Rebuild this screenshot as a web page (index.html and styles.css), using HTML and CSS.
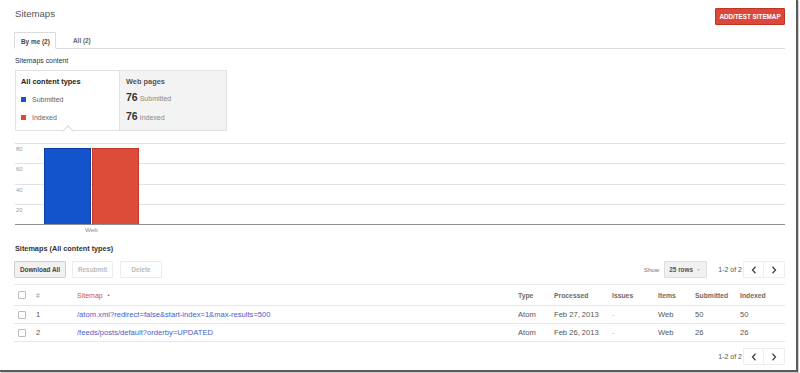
FILE: index.html
```html
<!DOCTYPE html>
<html>
<head>
<meta charset="utf-8">
<link rel="stylesheet" href="styles.css">
</head>
<body>
<div class="frame">
  <div class="page">
    <div class="topbar">
      <div class="title">Sitemaps</div>
      <button class="btn-red">ADD/TEST SITEMAP</button>
    </div>
    <div class="tabs">
      <div class="tab active">By me (2)</div>
      <div class="tab">All (2)</div>
    </div>
    <div class="section-label">Sitemaps content</div>
    <div class="summary">
      <div class="panel panel-left">
        <div class="panel-head">All content types</div>
        <div class="legend"><span class="sq sq-blue"></span>Submitted</div>
        <div class="legend"><span class="sq sq-red"></span>Indexed</div>
      </div>
      <div class="panel panel-right">
        <div class="panel-head2">Web pages</div>
        <div class="stat"><b>76</b>Submitted</div>
        <div class="stat"><b>76</b>Indexed</div>
      </div>
    </div>
    <div class="chart">
      <div class="plot">
        <div class="band"><span>80</span></div>
        <div class="band b21"><span>60</span></div>
        <div class="band"><span>40</span></div>
        <div class="band"><span>20</span></div>
        <div class="bars">
          <div class="bar bar-blue"></div>
          <div class="bar bar-red"></div>
        </div>
      </div>
      <div class="xlabels"><span class="xl">Web</span></div>
    </div>
    <div class="section-label2">Sitemaps (All content types)</div>
    <div class="toolbar">
      <div class="tb-left">
        <button class="btn btn-main">Download All</button>
        <button class="btn btn-dis">Resubmit</button>
        <button class="btn btn-dis btn-del">Delete</button>
      </div>
      <div class="tb-right">
        <span class="show">Show</span>
        <button class="btn btn-select">25 rows <span class="caret">&#9660;</span></button>
        <span class="count">1-2 of 2</span>
        <div class="pager">
          <button class="pg"><svg width="6" height="8" viewBox="0 0 6 8"><polyline points="4.5,0.8 1.5,4 4.5,7.2" fill="none" stroke="#444" stroke-width="1.3"/></svg></button>
          <button class="pg"><svg width="6" height="8" viewBox="0 0 6 8"><polyline points="1.5,0.8 4.5,4 1.5,7.2" fill="none" stroke="#444" stroke-width="1.3"/></svg></button>
        </div>
      </div>
    </div>
    <table class="grid">
      <colgroup>
        <col class="c1"><col class="c2"><col class="c3"><col class="c4"><col class="c5"><col class="c6"><col class="c7"><col class="c8"><col class="c9">
      </colgroup>
      <thead>
        <tr>
          <th><span class="cb"></span></th>
          <th class="hash">#</th>
          <th class="sort">Sitemap <span class="up">&#9650;</span></th>
          <th>Type</th>
          <th>Processed</th>
          <th>Issues</th>
          <th>Items</th>
          <th>Submitted</th>
          <th>Indexed</th>
        </tr>
      </thead>
      <tbody>
        <tr>
          <td><span class="cb"></span></td>
          <td>1</td>
          <td><a href="#">/atom.xml?redirect=false&amp;start-index=1&amp;max-results=500</a></td>
          <td>Atom</td>
          <td>Feb 27, 2013</td>
          <td class="dash">-</td>
          <td>Web</td>
          <td>50</td>
          <td>50</td>
        </tr>
        <tr>
          <td><span class="cb"></span></td>
          <td>2</td>
          <td><a href="#">/feeds/posts/default?orderby=UPDATED</a></td>
          <td>Atom</td>
          <td>Feb 26, 2013</td>
          <td class="dash">-</td>
          <td>Web</td>
          <td>26</td>
          <td>26</td>
        </tr>
      </tbody>
    </table>
    <div class="footer">
      <span class="count">1-2 of 2</span>
      <div class="pager">
        <button class="pg"><svg width="6" height="8" viewBox="0 0 6 8"><polyline points="4.5,0.8 1.5,4 4.5,7.2" fill="none" stroke="#444" stroke-width="1.3"/></svg></button>
        <button class="pg"><svg width="6" height="8" viewBox="0 0 6 8"><polyline points="1.5,0.8 4.5,4 1.5,7.2" fill="none" stroke="#444" stroke-width="1.3"/></svg></button>
      </div>
    </div>
  </div>
</div>
</body>
</html>
```
FILE: styles.css
```css
* { box-sizing: border-box; }
html, body { margin: 0; padding: 0; background: #fff; }
body { font-family: "Liberation Sans", Arial, sans-serif; color: #444; width: 800px; height: 373px; overflow: hidden; }

.frame {
  width: 798px;
  height: 372px;
  border-right: 2px solid #5a5a5a;
  border-bottom: 2px solid #5a5a5a;
  box-shadow: 1px 1px 0 #cfcfcf;
}
.page { padding: 0 11px 0 14px; }

.topbar { height: 32px; display: flex; justify-content: space-between; align-items: flex-start; }
.title { font-size: 9.6px; color: #555; padding: 8px 0 0 1px; line-height: 11px; }
.btn-red {
  margin-top: 8px; height: 17px; width: 70px; padding: 0;
  background: #d9483a; border: 1px solid #c23321; border-radius: 1px;
  color: #fff; font-family: inherit; font-weight: bold; font-size: 6.3px; letter-spacing: 0;
}

.tabs { height: 17px; border-bottom: 1px solid #dcdcdc; display: flex; align-items: flex-end; }
.tab { font-size: 6.4px; font-weight: bold; color: #666; height: 16px; line-height: 16px; padding: 0 8px; margin-bottom: -1px; }
.tab.active { color: #444; border: 1px solid #dcdcdc; border-bottom: 1px solid #fff; background: #fff; width: 42px; padding: 0 0 0 6px; height: 17px; line-height: 17px; margin-right: 9px; }

.section-label { margin-top: 6px; height: 12px; line-height: 12px; font-size: 6.9px; color: #333; padding-left: 1px; }

.summary { margin: 3px 0 0 1px; width: 212px; height: 61px; display: flex; border: 1px solid #e2e2e2; }
.panel { height: 100%; }
.panel-left { width: 104px; background: #fff; border-right: 1px solid #e2e2e2; padding: 5px 0 0 5px; position: relative; }
.panel-left::after {
  content: ""; position: absolute; left: 48px; bottom: -5px; width: 7px; height: 7px;
  background: #fff; border-left: 1px solid #d8d8d8; border-top: 1px solid #d8d8d8; transform: rotate(45deg);
}
.panel-right { flex: 1; background: #f3f3f3; padding: 5px 0 0 6px; }
.panel-head { font-size: 7.4px; font-weight: bold; color: #222; height: 11px; line-height: 11px; margin-bottom: 7px; }
.panel-head2 { font-size: 7.4px; font-weight: bold; color: #555; height: 11px; line-height: 11px; margin-bottom: 4px; }
.legend { font-size: 7px; color: #666; height: 18px; line-height: 11px; display: flex; align-items: flex-start; }
.sq { width: 5px; height: 5px; margin: 3px 6px 0 0; display: inline-block; }
.sq-blue { background: #1a51c8; }
.sq-red { background: #dc4a38; }
.stat { font-size: 7px; color: #888; height: 19px; display: flex; align-items: baseline; }
.stat b { font-size: 10.5px; color: #333; margin-right: 2px; }

.chart { margin: 12px 0 0 1px; }
.plot { position: relative; border-bottom: 1px solid #8e8e8e; }
.band { height: 20px; border-top: 1px solid #e3e3e3; font-size: 5.8px; color: #999; padding: 2px 0 0 1px; line-height: 6px; }
.band.b21 { height: 21px; }
.bars { position: absolute; left: 29px; bottom: 0; display: flex; gap: 1px; align-items: flex-end; }
.bar { width: 47px; height: 76px; }
.bar-blue { background: #1353cb; border: 1px solid #0a3fa8; border-bottom: none; }
.bar-red { background: #dd4b39; border: 1px solid #c43a27; border-bottom: none; }
.xlabels { height: 11px; position: relative; }
.xl { position: absolute; left: 70px; top: 1px; font-size: 6.2px; color: #888; line-height: 8px; }

.section-label2 { margin-top: 7px; height: 12px; line-height: 12px; font-size: 7.3px; font-weight: bold; color: #333; padding-left: 1px; }

.toolbar { margin-top: 6px; display: flex; justify-content: space-between; height: 17px; }
.tb-left, .tb-right { display: flex; align-items: center; }
.btn { height: 17px; font-family: inherit; font-size: 6.4px; font-weight: bold; border-radius: 1px; padding: 0; }
.btn-main { width: 52px; background: #f1f1f1; border: 1px solid #cfcfcf; color: #444; margin-right: 6px; }
.btn-dis { width: 41px; background: #fff; border: 1px solid #ececec; color: #bbb; margin-right: 7px; }
.btn-del { width: 42px; }
.show { font-size: 6.2px; color: #777; margin-right: 5px; }
.btn-select { width: 43px; background: #f1f1f1; border: 1px solid #dedede; color: #555; margin-right: 11px; text-align: left; padding-left: 4px; }
.caret { font-size: 3.5px; color: #aaa; margin-left: 2px; vertical-align: 1px; }
.count { font-size: 7px; color: #555; margin-right: 1px; }
.pager { display: flex; }
.pg { width: 21px; height: 17px; background: #fff; border: 1px solid #eee; padding: 0; display: flex; align-items: center; justify-content: center; }
.pg + .pg { border-left: none; }

.grid { margin-top: 6px; width: 771px; border-collapse: collapse; table-layout: fixed; }
.c1 { width: 22px; } .c2 { width: 41px; } .c3 { width: 441px; } .c4 { width: 36px; } .c5 { width: 58px; }
.c6 { width: 46px; } .c7 { width: 37px; } .c8 { width: 45px; } .c9 { width: 45px; }
.grid th, .grid td { padding: 0; text-align: left; white-space: nowrap; overflow: hidden; }
.grid thead tr { border-top: 1px solid #eaeaea; border-bottom: 1px solid #e6e6e6; height: 21px; }
.grid th { font-size: 6.8px; font-weight: bold; color: #6e6a63; }
.grid th.hash { color: #999; font-weight: normal; font-size: 6.5px; }
.grid th.sort { color: #dd4b39; font-weight: normal; font-size: 7px; }
.up { font-size: 3.5px; vertical-align: 1.5px; margin-left: 2px; }
.grid tbody tr { height: 18px; border-bottom: 1px solid #e6e6e6; }
.grid td { font-size: 7.6px; color: #555; }
.grid td.dash { color: #aaa; }
.grid a { color: #4760cb; text-decoration: none; }
.cb { display: block; width: 8px; height: 8px; border: 1px solid #bdbdbd; border-radius: 1px; margin-left: 4px; }

.footer { margin-top: 6px; display: flex; justify-content: flex-end; align-items: center; height: 17px; }
```
